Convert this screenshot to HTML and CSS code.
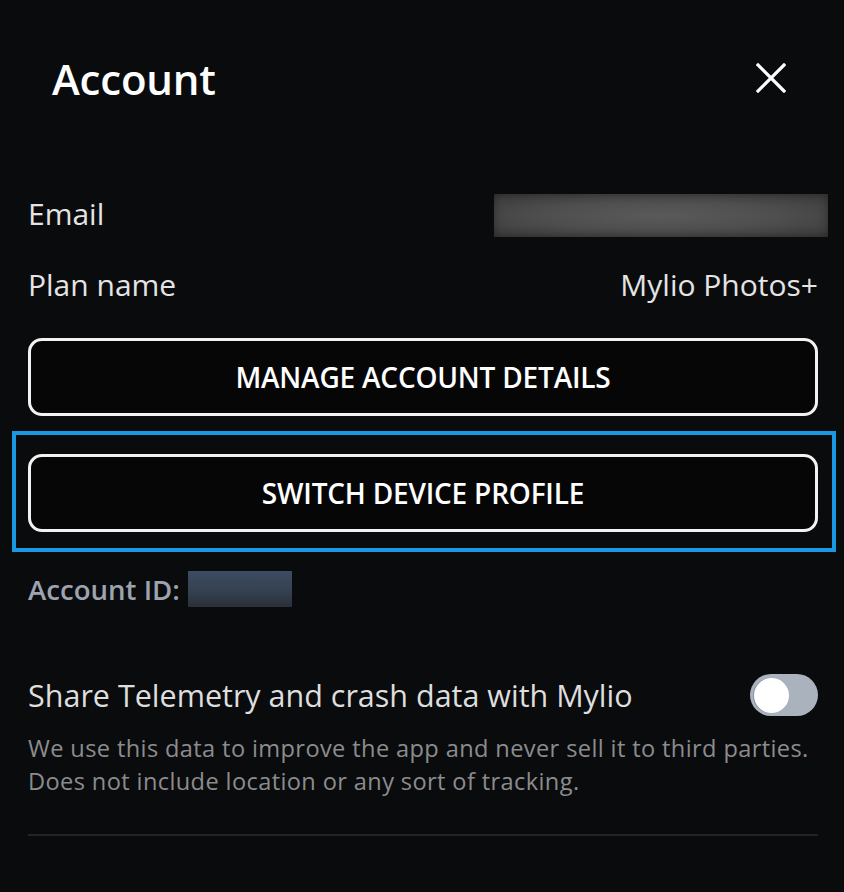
FILE: index.html
```html
<!DOCTYPE html>
<html>
<head>
<meta charset="utf-8">
<link rel="stylesheet" href="styles.css">
</head>
<body>
<div class="panel">
  <header class="head">
    <h1 class="title">Account</h1>
    <button class="close" aria-label="Close">
      <svg width="30" height="30" viewBox="0 0 30 30"><path d="M2 2 L28 28 M28 2 L2 28" stroke="#fff" stroke-width="3.2" stroke-linecap="square"/></svg>
    </button>
  </header>
  <div class="rows">
    <div class="row email-row">
      <span class="label">Email</span>
      <span class="blur-email"></span>
    </div>
    <div class="row plan-row">
      <span class="label">Plan name</span>
      <span class="value">Mylio Photos+</span>
    </div>
  </div>
  <button class="btn manage">MANAGE ACCOUNT DETAILS</button>
  <div class="focus-ring">
    <button class="btn switch">SWITCH DEVICE PROFILE</button>
  </div>
  <div class="account-id">
    <span>Account ID:</span>
    <span class="blur-id"></span>
  </div>
  <div class="telemetry">
    <div class="tele-row">
      <span class="tele-title">Share Telemetry and crash data with Mylio</span>
      <span class="toggle"><span class="knob"></span></span>
    </div>
    <p class="tele-desc">We use this data to improve the app and never sell it to third parties.<br>Does not include location or any sort of tracking.</p>
  </div>
  <div class="divider"></div>
</div>
</body>
</html>
```

FILE: styles.css
```css
html, body {
  margin: 0;
  padding: 0;
  background: #0a0b0d;
}
body {
  width: 844px;
  height: 892px;
  overflow: hidden;
  font-family: "Open Sans", "Noto Sans", sans-serif;
  color: #e6e6e6;
}
.panel {
  padding: 0 26px 0 28px;
}
.head {
  display: flex;
  align-items: center;
  justify-content: space-between;
  height: 156px;
  padding: 0 32px 0 24px;
}
.title {
  margin: 0;
  font-size: 42px;
  font-weight: 600;
  color: #ffffff;
  letter-spacing: -0.2px;
}
.close {
  background: none;
  border: none;
  padding: 0;
  width: 30px;
  height: 30px;
  display: flex;
}
.rows {
  display: flex;
  flex-direction: column;
  margin-top: 38px;
}
.row {
  display: flex;
  align-items: center;
  justify-content: space-between;
  font-size: 30px;
  color: #e4e4e4;
}
.email-row {
  height: 43px;
  margin-right: -10px;
}
.email-row .label {
  position: relative;
  top: -2px;
}
.plan-row {
  height: 44px;
  margin-top: 25px;
}
.blur-email {
  width: 334px;
  height: 43px;
  background: radial-gradient(ellipse at 50% 50%, #5a5a5b 0%, #4e4e4f 50%, #3a3a3b 100%);
  box-shadow: inset 0 0 10px rgba(0,0,0,0.35);
}
.value {
  color: #e4e4e4;
}
.btn {
  display: block;
  width: 100%;
  height: 78px;
  box-sizing: border-box;
  background: #060607;
  border: 3px solid #f2f2f2;
  border-radius: 14px;
  color: #ffffff;
  font-family: "Open Sans", "Noto Sans", sans-serif;
  font-size: 28px;
  font-weight: 600;
  letter-spacing: -0.2px;
  padding: 0;
}
.manage {
  margin-top: 32px;
}
.focus-ring {
  margin: 15px -18px 0 -16px;
  border: 4px solid #1a98e2;
  padding: 19px 14px 16px 12px;
}
.account-id {
  display: flex;
  align-items: center;
  gap: 8px;
  margin-top: 19px;
  height: 36px;
  font-size: 27.6px;
  font-weight: 600;
  color: #9ba4b0;
}
.blur-id {
  width: 104px;
  height: 36px;
  background: linear-gradient(180deg, #3d4c63 0%, #34404f 60%, #2a2f38 100%);
}
.telemetry {
  margin-top: 66px;
}
.tele-row {
  display: flex;
  align-items: center;
  justify-content: space-between;
  height: 44px;
}
.tele-title {
  font-size: 30.5px;
  color: #dedede;
}
.toggle {
  width: 68px;
  height: 42px;
  border-radius: 21px;
  background: #a9b2bd;
  display: flex;
  align-items: center;
  padding-left: 4px;
  box-sizing: border-box;
}
.knob {
  width: 35px;
  height: 35px;
  border-radius: 50%;
  background: #ffffff;
  box-shadow: -1px 0 0 #8a929c;
}
.tele-desc {
  margin: 15px 0 0 0;
  font-size: 23.6px;
  letter-spacing: 0.38px;
  line-height: 33px;
  color: #8c8c8e;
  white-space: nowrap;
}
.divider {
  margin-top: 36px;
  height: 2px;
  background: #232428;
}
```
